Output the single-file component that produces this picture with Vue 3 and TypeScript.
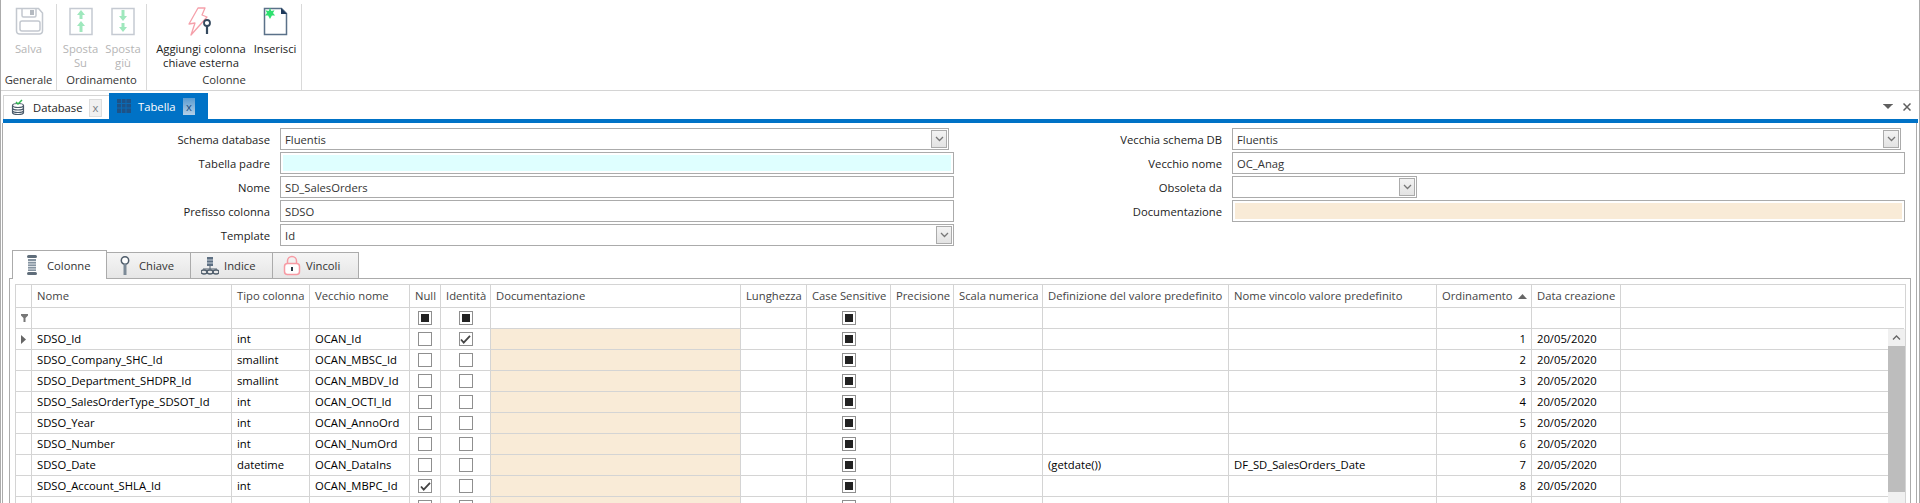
<template>
  <div class="app">
    <div class="ribbon">
      <div v-for="group in ribbonGroups" :key="group.label" class="group" :style="{ width: group.width + 'px' }">
        <div class="group-items">
          <div
            v-for="item in group.items"
            :key="item.id"
            class="ribbon-btn"
            :class="{ disabled: item.disabled }"
            :style="{ width: item.width + 'px' }"
          >
            <svg class="ribbon-icon" width="32" height="32" viewBox="0 0 32 32" fill="none">
              <template v-if="item.id === 'save'">
                <path d="M3.500 3.500h22l4 4.500v18a3 3 0 0 1-3 3h-20a3 3 0 0 1-3-3z" stroke="#c3c8cf" stroke-width="1.500" />
                <path d="M9 3.500v7a1.500 1.500 0 0 0 1.500 1.500h11a1.500 1.500 0 0 0 1.500-1.500v-7" stroke="#c3c8cf" stroke-width="1.500" />
                <rect x="17" y="5" width="4" height="5" fill="#b4b9c0" />
                <rect x="7" y="16" width="20" height="10" rx="2" stroke="#c3c8cf" stroke-width="1.500" />
              </template>
              <template v-else-if="item.id === 'up'">
                <rect x="5" y="3.500" width="22" height="26" stroke="#c5cad2" stroke-width="1.500" />
                <path d="M16 5l4 5h-2.500v4h-3v-4H12zM16 16l4 5h-2.500v6h-3v-6H12z" fill="#9fe8bd" />
              </template>
              <template v-else-if="item.id === 'down'">
                <rect x="5" y="3.500" width="22" height="26" stroke="#c5cad2" stroke-width="1.500" />
                <path d="M14.500 5h3v6H20l-4 5-4-5h2.500zM14.500 18h3v4H20l-4 5-4-5h2.500z" fill="#9fe8bd" />
              </template>
              <template v-else-if="item.id === 'fk'">
                <path d="M13 3h7l-3 7 5 2L6 30l4-12-6 1z" stroke="#f5a0aa" stroke-width="1.300" fill="#fff" stroke-linejoin="round" />
                <circle cx="22" cy="18" r="3" stroke="#34495e" stroke-width="1.800" fill="#fff" />
                <path d="M22 21v8" stroke="#34495e" stroke-width="2.200" />
              </template>
              <template v-else>
                <path d="M5.500 3.500h17l5 5v21h-22z" stroke="#5a7189" stroke-width="1.500" fill="#fff" />
                <path d="M22 3l6 6h-6z" fill="#1f3a5c" />
                <path d="M11 3l1.400 3 3.100-.8-1.500 2.900 2.100 2.300-3.200.2L11 14l-1.900-3.400-3.200-.2 2.100-2.300-1.500-2.900 3.100.8z" fill="#2fe06f" />
              </template>
            </svg>
            <span class="ribbon-text">{{ item.text }}</span>
          </div>
        </div>
        <div class="group-label">{{ group.label }}</div>
      </div>
    </div>

    <div class="doc-tabs">
      <div class="doc-tab">
        <svg width="14" height="17" viewBox="0 0 14 17" fill="none">
          <ellipse cx="7" cy="6.500" rx="5.500" ry="2" stroke="#4a5a6a" stroke-width="1.200" />
          <path d="M1.500 6.500v7c0 1.100 2.500 2 5.500 2s5.500-.9 5.500-2v-7M1.500 9c0 1.100 2.500 2 5.500 2s5.500-.9 5.500-2M1.500 11.500c0 1.100 2.500 2 5.500 2s5.500-.9 5.500-2" stroke="#4a5a6a" stroke-width="1.200" />
          <path d="M5 3l2 2 4-4" stroke="#2fb84f" stroke-width="1.500" />
        </svg>
        <span class="doc-tab-text">Database</span>
        <span class="doc-close">x</span>
      </div>
      <div class="doc-tab active">
        <svg width="14" height="14" viewBox="0 0 14 14">
          <rect width="14" height="14" fill="#1d5287" />
          <path d="M0 4.500h14M0 9h14M4.500 0v14M9 0v14" stroke="#0a6bb5" stroke-width="1" />
        </svg>
        <span class="doc-tab-text">Tabella</span>
        <span class="doc-close">x</span>
      </div>
      <div class="doc-actions">
        <svg width="10" height="6" viewBox="0 0 10 6"><path d="M0 0h10L5 5z" fill="#5f5f5f" /><path d="M0 0h10" stroke="#5f5f5f" /></svg>
        <svg width="8" height="8" viewBox="0 0 8 8"><path d="M.5.500l7 7M7.500.500l-7 7" stroke="#5f5f5f" stroke-width="1.500" /></svg>
      </div>
    </div>
    <div class="doc-bar"></div>

    <div class="doc-body">
      <div class="form">
        <div v-for="(column, c) in formColumns" :key="c" class="form-col">
          <div v-for="field in column" :key="field.label" class="form-row">
            <label class="form-label">{{ field.label }}</label>
            <div class="field" :style="{ width: field.width + 'px' }" :class="field.tone">
              <span class="field-value">{{ field.value }}</span>
              <span v-if="field.combo" class="combo-btn">
                <svg width="9" height="6" viewBox="0 0 9 6" fill="none"><path d="M1 1l3.500 3.500L8 1" stroke="#777" stroke-width="1.300" /></svg>
              </span>
            </div>
          </div>
        </div>
      </div>

      <div class="tab-strip">
        <div
          v-for="(tab, i) in innerTabs"
          :key="tab.label"
          class="inner-tab"
          :class="{ active: i === 0 }"
          :style="{ width: tab.width + 'px', paddingLeft: tab.pad + 'px' }"
        >
          <svg width="18" height="22" viewBox="0 0 18 22" fill="none">
            <template v-if="tab.label === 'Colonne'">
              <rect x="3" y="1" width="10" height="3" rx="1.500" fill="#5f6d7a" />
              <rect x="4" y="5" width="8" height="12" fill="#8593a0" />
              <path d="M4 7.500h8M4 10h8M4 12.500h8M4 15h8" stroke="#dde2e6" />
              <rect x="3" y="18" width="10" height="3" rx="1.500" fill="#5f6d7a" />
            </template>
            <template v-else-if="tab.label === 'Chiave'">
              <circle cx="9" cy="5.500" r="3.700" stroke="#4f5d6b" stroke-width="1.500" fill="#fff" />
              <path d="M9 9v11" stroke="#7c8a97" stroke-width="3" />
            </template>
            <template v-else-if="tab.label === 'Indice'">
              <rect x="6" y="2" width="6" height="9" fill="#5d6f82" />
              <path d="M6 5h6M6 8h6" stroke="#c9d2da" />
              <path d="M9 11v3M2 14h14" stroke="#4f5d6b" />
              <ellipse cx="3" cy="17" rx="3" ry="2" stroke="#4f5d6b" stroke-width="1.300" />
              <ellipse cx="9" cy="17" rx="3" ry="2" stroke="#4f5d6b" stroke-width="1.300" />
              <ellipse cx="15" cy="17" rx="3" ry="2" stroke="#4f5d6b" stroke-width="1.300" />
            </template>
            <template v-else>
              <path d="M4.500 9V6a4.500 4.500 0 0 1 9 0v3" stroke="#f79aa3" stroke-width="1.500" />
              <rect x="1.500" y="8.500" width="15" height="11" rx="3" stroke="#f79aa3" stroke-width="1.500" fill="#fff" />
              <rect x="8" y="12" width="2" height="4" fill="#2e3b48" />
            </template>
          </svg>
          <span>{{ tab.label }}</span>
        </div>
      </div>

      <div class="pane">
        <div class="table">
          <div class="row head">
            <div
              v-for="(col, i) in columns"
              :key="'h' + i"
              class="cell"
              :class="{ 'cell-sorted': col.sorted }"
            >
              <span>{{ col.title }}</span>
              <svg v-if="col.sorted" width="9" height="5" viewBox="0 0 9 5"><path d="M4.500 0L9 5H0z" fill="#666" /></svg>
            </div>
          </div>
          <div class="row filter">
            <div v-for="(col, i) in columns" :key="'f' + i" class="cell" :class="{ center: col.check }">
              <svg v-if="i === 0" width="7" height="8" viewBox="0 0 7 8"><path d="M0 0h7v1.500L4.500 4v4h-2V4L0 1.500z" fill="#777" /></svg>
              <span v-if="col.check" class="check mixed"></span>
            </div>
          </div>
          <div v-for="(row, r) in rows" :key="r" class="row">
            <div class="cell"><svg v-if="r === 0" width="5" height="9" viewBox="0 0 5 9"><path d="M0 0l5 4.500L0 9z" fill="#666" /></svg></div>
            <div class="cell">{{ row.name }}</div>
            <div class="cell">{{ row.type }}</div>
            <div class="cell">{{ row.old }}</div>
            <div class="cell center"><span class="check"><svg v-if="row.nullable" viewBox="0 0 12 10" width="11" height="9" fill="none"><path d="M1 5l3 3.500L11 1" stroke="#444" stroke-width="2" /></svg></span></div>
            <div class="cell center"><span class="check"><svg v-if="row.identity" viewBox="0 0 12 10" width="11" height="9" fill="none"><path d="M1 5l3 3.500L11 1" stroke="#444" stroke-width="2" /></svg></span></div>
            <div class="cell peach"></div>
            <div class="cell"></div>
            <div class="cell center"><span class="check mixed"></span></div>
            <div class="cell"></div>
            <div class="cell"></div>
            <div class="cell">{{ row.def }}</div>
            <div class="cell">{{ row.constraint }}</div>
            <div class="cell right">{{ row.name ? r + 1 : '' }}</div>
            <div class="cell">{{ row.name ? '20/05/2020' : '' }}</div>
            <div class="cell"></div>
          </div>
          <div class="scrollbar">
            <div class="scroll-up">
              <svg width="9" height="5" viewBox="0 0 9 5" fill="none"><path d="M1 4.500L4.500 1 8 4.500" stroke="#666" stroke-width="1.300" /></svg>
            </div>
            <div class="scroll-thumb"></div>
          </div>
        </div>
      </div>
    </div>
  </div>
</template>

<script setup lang="ts">
interface RibbonItem {
  id: string
  text: string
  width: number
  disabled?: boolean
}

interface Field {
  label: string
  value: string
  width: number
  combo?: boolean
  tone?: string
}

interface Column {
  title: string
  check?: boolean
  sorted?: boolean
}

interface Row {
  name: string
  type: string
  old: string
  nullable?: boolean
  identity?: boolean
  def?: string
  constraint?: string
}

const ribbonGroups: { label: string; width: number; items: RibbonItem[] }[] = [
  { label: 'Generale', width: 56, items: [{ id: 'save', text: 'Salva', width: 55, disabled: true }] },
  {
    label: 'Ordinamento',
    width: 90,
    items: [
      { id: 'up', text: 'Sposta Su', width: 43, disabled: true },
      { id: 'down', text: 'Sposta giù', width: 42, disabled: true },
    ],
  },
  {
    label: 'Colonne',
    width: 155,
    items: [
      { id: 'fk', text: 'Aggiungi colonna chiave esterna', width: 102 },
      { id: 'ins', text: 'Inserisci', width: 46 },
    ],
  },
]

const formColumns: Field[][] = [
  [
    { label: 'Schema database', value: 'Fluentis', width: 669, combo: true },
    { label: 'Tabella padre', value: '', width: 674, tone: 'cyan' },
    { label: 'Nome', value: 'SD_SalesOrders', width: 674 },
    { label: 'Prefisso colonna', value: 'SDSO', width: 674 },
    { label: 'Template', value: 'Id', width: 674, combo: true },
  ],
  [
    { label: 'Vecchia schema DB', value: 'Fluentis', width: 669, combo: true },
    { label: 'Vecchio nome', value: 'OC_Anag', width: 674 },
    { label: 'Obsoleta da', value: '', width: 185, combo: true },
    { label: 'Documentazione', value: '', width: 674, tone: 'peach-field' },
  ],
]

const innerTabs = [
  { label: 'Colonne', width: 95, pad: 11 },
  { label: 'Chiave', width: 84, pad: 9 },
  { label: 'Indice', width: 82, pad: 10 },
  { label: 'Vincoli', width: 86, pad: 10 },
]

const columns: Column[] = [
  { title: '' },
  { title: 'Nome' },
  { title: 'Tipo colonna' },
  { title: 'Vecchio nome' },
  { title: 'Null', check: true },
  { title: 'Identità', check: true },
  { title: 'Documentazione' },
  { title: 'Lunghezza' },
  { title: 'Case Sensitive', check: true },
  { title: 'Precisione' },
  { title: 'Scala numerica' },
  { title: 'Definizione del valore predefinito' },
  { title: 'Nome vincolo valore predefinito' },
  { title: 'Ordinamento', sorted: true },
  { title: 'Data creazione' },
  { title: '' },
]

const rows: Row[] = [
  { name: 'SDSO_Id', type: 'int', old: 'OCAN_Id', identity: true },
  { name: 'SDSO_Company_SHC_Id', type: 'smallint', old: 'OCAN_MBSC_Id' },
  { name: 'SDSO_Department_SHDPR_Id', type: 'smallint', old: 'OCAN_MBDV_Id' },
  { name: 'SDSO_SalesOrderType_SDSOT_Id', type: 'int', old: 'OCAN_OCTI_Id' },
  { name: 'SDSO_Year', type: 'int', old: 'OCAN_AnnoOrd' },
  { name: 'SDSO_Number', type: 'int', old: 'OCAN_NumOrd' },
  { name: 'SDSO_Date', type: 'datetime', old: 'OCAN_DataIns', def: '(getdate())', constraint: 'DF_SD_SalesOrders_Date' },
  { name: 'SDSO_Account_SHLA_Id', type: 'int', old: 'OCAN_MBPC_Id', nullable: true },
  // riga tagliata in fondo alla finestra
  { name: '', type: '', old: '', nullable: true },
]
</script>

<style>
html,
body {
  margin: 0;
  background: #fff;
}
</style>

<style scoped>
.app {
  height: 503px;
  overflow: hidden;
  box-sizing: border-box;
  border-left: 1px solid #ababab;
  border-right: 1px solid #ababab;
  font-family: "Open Sans", Roboto, sans-serif;
  font-size: 11.25px;
  color: #000;
  background: #fff;
}

.ribbon {
  display: flex;
  height: 90px;
  border-bottom: 1px solid #d4d4d4;
}

.group {
  display: flex;
  flex-direction: column;
  box-sizing: border-box;
  height: 86px;
  margin-top: 4px;
  border-right: 1px solid #d9d9d9;
}

.group-items {
  display: flex;
  justify-content: center;
  flex: 1;
}

.ribbon-btn {
  display: flex;
  flex-direction: column;
  align-items: center;
  text-align: center;
  line-height: 14px;
  color: #222;
}

.ribbon-btn.disabled {
  color: #b5b5b5;
}

.ribbon-icon {
  margin-top: 1px;
  margin-bottom: 5px;
  flex: none;
}

.group-label {
  height: 18px;
  line-height: 16px;
  text-align: center;
  color: #333;
}

.doc-tabs {
  display: flex;
  align-items: flex-end;
  height: 28px;
  padding-left: 2px;
}

.doc-tab {
  display: flex;
  align-items: center;
  box-sizing: border-box;
  width: 106px;
  height: 24px;
  padding-left: 7px;
  border-top: 1px solid #d4d4d4;
  border-left: 1px solid #d4d4d4;
  color: #222;
}

.doc-tab-text {
  margin-left: 8px;
  width: 56px;
}

.doc-close {
  box-sizing: border-box;
  width: 13px;
  height: 18px;
  border: 1px solid #ddd;
  background: #f0f0f0;
  color: #7a7f86;
  text-align: center;
  line-height: 16px;
}

.doc-tab.active {
  width: 99px;
  height: 26px;
  padding-left: 8px;
  border: none;
  background: #0072c6;
  color: #fff;
}

.doc-tab.active .doc-tab-text {
  margin-left: 7px;
  width: 45px;
}

.doc-tab.active .doc-close {
  width: 12px;
  height: 17px;
  border: none;
  background: linear-gradient(#5a9bd0, #b5cfe6);
  color: #1f4f80;
  line-height: 17px;
}

.doc-actions {
  display: flex;
  align-items: center;
  gap: 10px;
  margin-left: auto;
  margin-right: 8px;
  height: 24px;
}

.doc-bar {
  height: 4px;
  margin-left: 2px;
  margin-right: 1px;
  background: #0072c6;
}

.doc-body {
  box-sizing: border-box;
  height: 380px;
  margin-left: 1px;
  margin-right: 2px;
  border-left: 1px solid #ababab;
  border-right: 1px solid #ababab;
  overflow: hidden;
}

.form {
  display: flex;
  padding-top: 5px;
  height: 122px;
}

.form-col {
  display: flex;
  flex-direction: column;
  gap: 2px;
  width: 951px;
}

.form-row {
  display: flex;
  align-items: center;
  gap: 10px;
  height: 22px;
}

.form-label {
  flex: none;
  width: 267px;
  text-align: right;
  color: #222;
}

.form-col + .form-col .form-label {
  width: 268px;
}

.field {
  position: relative;
  display: flex;
  align-items: center;
  box-sizing: border-box;
  height: 22px;
  padding-left: 4px;
  border: 1px solid #ababab;
  color: #333;
}

.field.cyan,
.field.peach-field {
  background-clip: content-box;
  padding: 2px;
}

.field.cyan {
  background-color: #dfffff;
}

.field.peach-field {
  background-color: #f9ebd7;
}

.combo-btn {
  position: absolute;
  top: 1px;
  right: 1px;
  display: flex;
  align-items: center;
  justify-content: center;
  box-sizing: border-box;
  width: 16px;
  height: 18px;
  border: 1px solid #ababab;
  background: linear-gradient(#f3f3f3, #e3e3e3);
}

.tab-strip {
  display: flex;
  align-items: flex-end;
  height: 28px;
  margin-left: 9px;
}

.inner-tab {
  display: flex;
  align-items: center;
  gap: 5px;
  box-sizing: border-box;
  height: 26px;
  border-top: 1px solid #ababab;
  border-right: 1px solid #ababab;
  background: linear-gradient(#f5f5f5, #e6e6e6);
  color: #333;
}

.inner-tab.active {
  position: relative;
  z-index: 1;
  height: 29px;
  margin-bottom: -1px;
  border-left: 1px solid #ababab;
  background: #fff;
}

.pane {
  box-sizing: border-box;
  height: 230px;
  margin-left: 6px;
  margin-right: 5px;
  padding: 5px 5px 0;
  border-top: 1px solid #ababab;
  border-left: 1px solid #ababab;
  border-right: 1px solid #ababab;
}

.table {
  position: relative;
  width: 1889px;
  border-top: 1px solid #d4d4d4;
  border-left: 1px solid #d4d4d4;
  border-right: 1px solid #d4d4d4;
}

.row {
  display: grid;
  grid-template-columns: 16px 200px 78px 100px 31px 50px 250px 66px 84px 63px 89px 186px 208px 95px 89px 283px;
  height: 21px;
  line-height: 20px;
}

.row.head {
  height: 23px;
  line-height: 22px;
  color: #444;
}

.cell {
  box-sizing: border-box;
  display: flex;
  align-items: center;
  padding-left: 5px;
  border-right: 1px solid #d4d4d4;
  border-bottom: 1px solid #d4d4d4;
  white-space: nowrap;
  overflow: hidden;
}

.cell:last-child {
  border-right: none;
}

.cell.center {
  justify-content: center;
  padding-left: 0;
}

.cell.right {
  justify-content: flex-end;
  padding-right: 5px;
}

.cell.peach {
  background: #f9ebd7;
}

.cell-sorted {
  justify-content: space-between;
  padding-right: 4px;
}

.check {
  display: flex;
  align-items: center;
  justify-content: center;
  box-sizing: border-box;
  width: 14px;
  height: 14px;
  border: 1px solid #8f8f8f;
  background: #fff;
}

.check.mixed::after {
  content: "";
  width: 8px;
  height: 8px;
  background: #222;
}

.scrollbar {
  position: absolute;
  top: 44px;
  right: 0;
  bottom: 0;
  width: 17px;
  background: #f0f0f0;
}

.scroll-up {
  display: flex;
  align-items: center;
  justify-content: center;
  height: 17px;
}

.scroll-thumb {
  height: 146px;
  background: #bdbdbd;
}
</style>
